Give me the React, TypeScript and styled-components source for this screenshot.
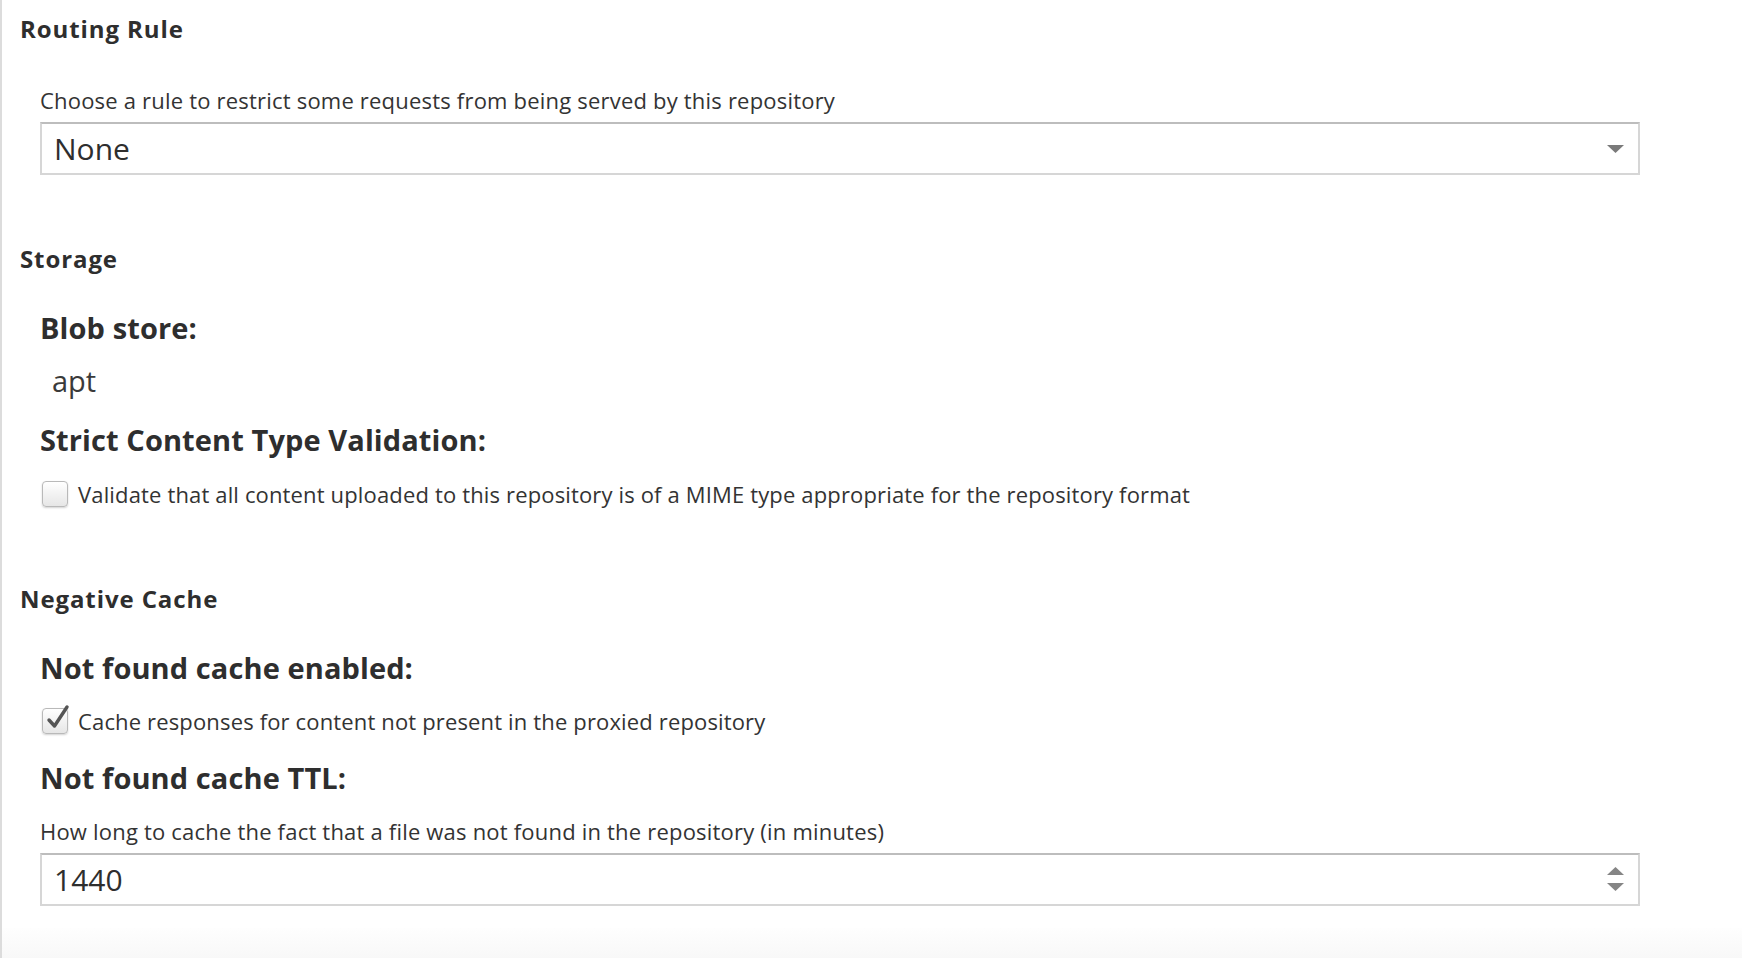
import React from "react";
import styled, { createGlobalStyle } from "styled-components";

const GlobalStyle = createGlobalStyle`
  html, body {
    margin: 0;
    padding: 0;
    background: #ffffff;
  }
  body {
    font-family: "Open Sans", "Liberation Sans", Arial, sans-serif;
    color: #333333;
  }
`;

const Page = styled.div`
  display: flex;
  flex-direction: column;
  height: 100vh;
  overflow: hidden;
  border-left: 2px solid #dcdcdc;
  box-sizing: border-box;
`;

const Content = styled.div`
  flex: 1;
  padding: 14px 0 0 18px;
`;

const FooterBar = styled.div`
  height: 30px;
  flex: none;
  background: linear-gradient(#fefefe, #f8f8f8);
`;

const Section = styled.section<{ $after: number }>`
  display: flex;
  flex-direction: column;
  margin-bottom: ${(p) => p.$after}px;
`;

const SectionTitle = styled.h2`
  margin: 0 0 34px;
  font-size: 24px;
  line-height: 30px;
  font-weight: 700;
  color: #2e2e2e;
  letter-spacing: 0.9px;
`;

const SectionBody = styled.div`
  display: flex;
  flex-direction: column;
  padding-left: 20px;
  padding-right: 102px;
`;

const Field = styled.div<{ $after?: number }>`
  display: flex;
  flex-direction: column;
  margin-bottom: ${(p) => p.$after ?? 0}px;
`;

const FieldLabel = styled.div<{ $space: number }>`
  font-size: 29px;
  line-height: 40px;
  font-weight: 700;
  color: #2e2e2e;
  letter-spacing: 0.1px;
  margin-bottom: ${(p) => p.$space}px;
`;

const HelpText = styled.div`
  font-size: 22px;
  line-height: 26px;
  letter-spacing: 0.2px;
  color: #333333;
  margin-top: -9px;
  margin-bottom: 9px;
`;

const HelpTextTop = styled(HelpText)`
  margin-top: 9px;
`;

const ValueText = styled.div`
  font-size: 29px;
  line-height: 40px;
  color: #3a3a3a;
  padding-left: 12px;
`;

const InputBox = styled.div`
  position: relative;
  display: flex;
  align-items: center;
  height: 53px;
  box-sizing: border-box;
  border: 2px solid #d6d6d6;
  border-top-color: #bdbdbd;
  background: #ffffff;
  padding: 0 14px 0 12px;
`;

const InputValue = styled.span`
  flex: 1;
  font-size: 30px;
  line-height: 40px;
  color: #2e2e2e;
`;

const TriggerIcon = styled.svg`
  flex: none;
  display: block;
`;

const CheckRow = styled.label`
  display: flex;
  align-items: center;
  gap: 10px;
  height: 26px;
  padding-left: 2px;
  cursor: pointer;
`;

const CheckBox = styled.span`
  position: relative;
  flex: none;
  width: 26px;
  height: 26px;
  box-sizing: border-box;
  border: 1px solid #b9b9b9;
  border-radius: 4px;
  background: linear-gradient(#ffffff, #e6e6e6);
  box-shadow: 0 1px 2px rgba(0, 0, 0, 0.18);
`;

const CheckMark = styled.svg`
  position: absolute;
  left: 2px;
  top: -5px;
  overflow: visible;
`;

const CheckText = styled.span`
  font-size: 22px;
  line-height: 26px;
  letter-spacing: 0.15px;
  color: #333333;
`;

const DropArrow = () => (
  <TriggerIcon width="17" height="8" viewBox="0 0 17 8">
    <path d="M0 0 H17 L8.5 8 Z" fill="#7a7a7a" />
  </TriggerIcon>
);

const SpinArrows = () => (
  <TriggerIcon width="17" height="25" viewBox="0 0 17 25">
    <path d="M0 8 L8.5 0 L17 8 Z" fill="#858585" />
    <path d="M0 16 H17 L8.5 24 Z" fill="#858585" />
  </TriggerIcon>
);

const Check = ({ checked, children }: { checked?: boolean; children: React.ReactNode }) => (
  <CheckRow>
    <CheckBox>
      {checked && (
        <CheckMark width="26" height="28" viewBox="0 0 26 28">
          <path
            d="M4 16 L9.5 22 L22 3"
            fill="none"
            stroke="#555555"
            strokeWidth="3.4"
            strokeLinecap="round"
            strokeLinejoin="round"
          />
        </CheckMark>
      )}
    </CheckBox>
    <CheckText>{children}</CheckText>
  </CheckRow>
);

export default function App() {
  return (
    <>
      <GlobalStyle />
      <Page>
        <Content>
          <Section $after={69}>
            <SectionTitle>Routing Rule</SectionTitle>
            <SectionBody>
              <Field>
                <HelpTextTop>
                  Choose a rule to restrict some requests from being served by this repository
                </HelpTextTop>
                <InputBox>
                  <InputValue>None</InputValue>
                  <DropArrow />
                </InputBox>
              </Field>
            </SectionBody>
          </Section>

          <Section $after={77}>
            <SectionTitle>Storage</SectionTitle>
            <SectionBody>
              <Field $after={19}>
                <FieldLabel $space={13}>Blob store:</FieldLabel>
                <ValueText>apt</ValueText>
              </Field>
              <Field>
                <FieldLabel $space={21}>Strict Content Type Validation:</FieldLabel>
                <Check>
                  Validate that all content uploaded to this repository is of a MIME type appropriate for the repository format
                </Check>
              </Field>
            </SectionBody>
          </Section>

          <Section $after={0}>
            <SectionTitle>Negative Cache</SectionTitle>
            <SectionBody>
              <Field $after={24}>
                <FieldLabel $space={20}>Not found cache enabled:</FieldLabel>
                <Check checked>Cache responses for content not present in the proxied repository</Check>
              </Field>
              <Field>
                <FieldLabel $space={29}>Not found cache TTL:</FieldLabel>
                <HelpText>
                  How long to cache the fact that a file was not found in the repository (in minutes)
                </HelpText>
                <InputBox>
                  <InputValue>1440</InputValue>
                  <SpinArrows />
                </InputBox>
              </Field>
            </SectionBody>
          </Section>
        </Content>
        <FooterBar />
      </Page>
    </>
  );
}
